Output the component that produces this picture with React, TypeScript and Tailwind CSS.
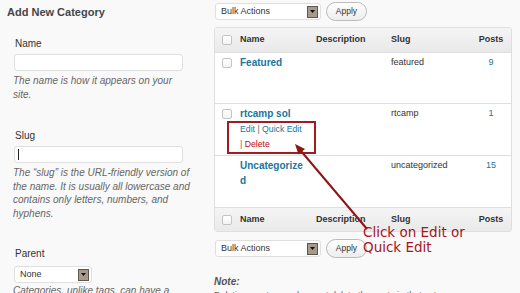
import React from "react";

const link = "text-[#21759b]";

function DropArrow() {
  return (
    <span className="flex h-[12px] w-[11px] items-center justify-center border border-[#5e574d] bg-[#a69b8b]">
      <svg width="5" height="3" viewBox="0 0 5 3">
        <path d="M0 0h5L2.5 3z" fill="#111" />
      </svg>
    </span>
  );
}

function Select({ label, w }: { label: string; w: string }) {
  return (
    <div className={`flex h-[17px] items-center justify-between rounded-[3px] border border-[#dfdfdf] bg-white pl-[5px] pr-[2px] text-[9px] text-[#333] ${w}`}>
      <span>{label}</span>
      <DropArrow />
    </div>
  );
}

function Check() {
  return <span className="block h-[10px] w-[10px] rounded-[2px] border border-[#c4c4c4] bg-gradient-to-b from-white to-[#f3f3f3]" />;
}

function BulkRow() {
  return (
    <div className="flex h-[19px] items-center gap-[5px] pl-px">
      <Select label="Bulk Actions" w="w-[106px]" />
      <button className="h-[19px] w-[41px] rounded-full border border-[#bbb] bg-gradient-to-b from-white to-[#ededed] text-[8.5px] text-[#333]">
        Apply
      </button>
    </div>
  );
}

function HeadRow({ top }: { top?: boolean }) {
  return (
    <div
      className={`flex h-[24px] items-center bg-gradient-to-b from-[#f5f5f5] to-[#e9e9e9] text-[9px] font-bold text-[#333] ${
        top ? "" : "border-t border-[#dfdfdf]"
      }`}
    >
      <div className="w-[25px] pl-[7px]">
        <Check />
      </div>
      <div className="w-[76px]">Name</div>
      <div className="w-[75px]">Description</div>
      <div className="flex-1">Slug</div>
      <div className="w-[40px] text-center">Posts</div>
    </div>
  );
}

const rows = [
  { name: "Featured", slug: "featured", posts: "9", h: "h-[51px]", check: true },
  { name: "rtcamp sol", slug: "rtcamp", posts: "1", h: "h-[52px]", check: true, actions: true },
  { name: "Uncategorized", slug: "uncategorized", posts: "15", h: "h-[52px]", check: false },
];

export default function App() {
  return (
    <div className="relative flex h-[293px] w-[520px] overflow-hidden bg-[#f9f9f9] font-['Liberation_Sans',Arial,sans-serif] text-[#333]">
      {/* form column */}
      <div className="w-[214px] shrink-0">
        <h2 className="ml-[7px] mt-[5px] text-[11px] font-bold leading-[14px] text-[#464646]">Add New Category</h2>
        <div className="ml-[14px]">
          <label className="mt-[18px] block pl-px text-[10px] leading-[14px]">Name</label>
          <div className="mt-[3px] h-[17px] w-[169px] rounded-[3px] border border-[#dfdfdf] bg-white" />
          <p className="-ml-px mt-[3px] whitespace-nowrap text-[10px] italic leading-[13.5px] text-[#666]">
            The name is how it appears on your
            <br />
            site.
          </p>

          <label className="mt-[28px] block pl-px text-[10px] leading-[14px]">Slug</label>
          <div className="mt-[3px] flex h-[17px] w-[169px] items-center rounded-[3px] border border-[#dfdfdf] bg-white">
            <span className="ml-[3px] block h-[11px] w-px bg-[#222]" />
          </div>
          <p className="-ml-px mt-[3px] whitespace-nowrap text-[10px] italic leading-[13.5px] text-[#666]">
            The “slug” is the URL-friendly version of
            <br />
            the name. It is usually all lowercase and
            <br />
            contains only letters, numbers, and
            <br />
            hyphens.
          </p>

          <label className="mt-[27px] block pl-px text-[10px] leading-[14px]">Parent</label>
          <div className="mt-[5px]">
            <Select label="None" w="w-[78px] h-[16px]" />
          </div>
          <p className="-ml-px mt-px whitespace-nowrap text-[10px] italic leading-[13.5px] text-[#666]">
            Categories, unlike tags, can have a
            <br />
            hierarchy.
          </p>
        </div>
      </div>

      {/* list column */}
      <div className="w-[298px] shrink-0 pt-[2px]">
        <BulkRow />
        <div className="mt-[6px] overflow-hidden rounded-[3px] border border-[#dfdfdf] bg-white">
          <HeadRow top />
          {rows.map((r) => (
            <div key={r.name} className={`flex items-start border-t border-[#dfdfdf] pt-[2px] ${r.h}`}>
              <div className="flex h-[15px] w-[25px] items-center pl-[7px]">{r.check && <Check />}</div>
              <div className="w-[76px]">
                <div className={`w-[66px] break-all text-[10px] font-bold leading-[15px] ${link}`}>{r.name}</div>
                {r.actions && (
                  <div className="mt-px whitespace-nowrap text-[8.7px] leading-[15px]">
                    <div>
                      <span className={link}>Edit</span> <span className="text-[#666]">|</span>{" "}
                      <span className={link}>Quick Edit</span>
                    </div>
                    <div>
                      <span className="text-[#666]">|</span> <span className="text-[#bc0b0b]">Delete</span>
                    </div>
                  </div>
                )}
              </div>
              <div className="w-[75px]" />
              <div className="flex-1 text-[9px] leading-[15px]">{r.slug}</div>
              <div className={`w-[40px] text-center text-[9px] leading-[15px] ${link}`}>{r.posts}</div>
            </div>
          ))}
          <HeadRow />
        </div>
        <div className="mt-[7px]">
          <BulkRow />
        </div>
        <p className="mt-[17px] text-[10px] font-bold italic leading-[14px] text-[#555]">Note:</p>
        <p className="whitespace-nowrap text-[9px] leading-[13px] text-[#666]">
          Deleting a category does not delete the posts in that category.
        </p>
      </div>

      {/* annotation */}
      <div className="pointer-events-none absolute left-[227px] top-[121px] h-[33px] w-[89px] border-2 border-[#a01c22]" />
      <svg className="pointer-events-none absolute left-0 top-0" width="520" height="293" viewBox="0 0 520 293">
        <line x1="367" y1="229" x2="301" y2="151" stroke="#8c1515" strokeWidth="2" />
        <polygon points="295,144 305,149 298.5,154.5" fill="#8c1515" />
      </svg>
      <div className="pointer-events-none absolute left-[363px] top-[225px] whitespace-nowrap font-['DejaVu_Sans',sans-serif] text-[13.5px] leading-[15px] text-[#a3161c]">
        Click on Edit or
        <br />
        Quick Edit
      </div>
    </div>
  );
}
